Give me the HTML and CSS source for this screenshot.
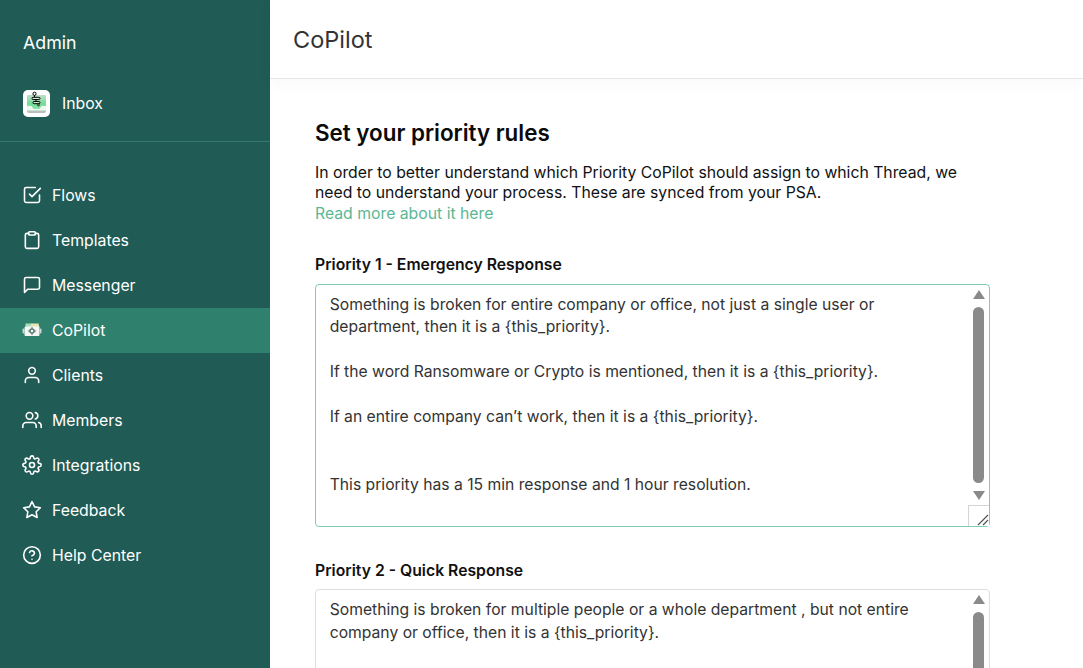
FILE: index.html
```html
<!DOCTYPE html>
<html lang="en">
<head>
<meta charset="utf-8">
<title>CoPilot</title>
<link rel="stylesheet" href="styles.css">
</head>
<body>
<div class="app">
  <aside class="sidebar">
    <div class="workspace">Admin</div>
    <div class="inbox">
      <span class="inbox-logo">
        <svg width="27" height="27" viewBox="0 0 27 27">
          <defs>
            <linearGradient id="tray" x1="0" y1="0" x2="0" y2="1">
              <stop offset="0" stop-color="#c4dccb"/>
              <stop offset=".55" stop-color="#74dc97"/>
              <stop offset="1" stop-color="#8fe6ad"/>
            </linearGradient>
          </defs>
          <rect x="0" y="0" width="27" height="27" rx="5" fill="#fff"/>
          <rect x="4" y="6" width="19" height="17" rx="2" fill="#bdbdbd"/>
          <rect x="4" y="5" width="19" height="15.500" rx="1" fill="url(#tray)"/>
          <path d="M4 16h4.500l2 3h6l2-3H23v4.500H4z" fill="#eef8ef"/>
          <circle cx="11.500" cy="3.800" r="1.600" fill="#fff" stroke="#000" stroke-width="1"/>
          <path d="M11.500 5.400V7.300" stroke="#000" stroke-width="1" fill="none"/>
          <rect x="9" y="7.300" width="8" height="2.200" rx="1.100" fill="#d9efdf" stroke="#000" stroke-width="1"/>
          <path d="M13 9.500v2" stroke="#000" stroke-width="1" fill="none"/>
          <rect x="10" y="11.500" width="7" height="2.200" rx="1.100" fill="#c7efd4" stroke="#000" stroke-width="1"/>
          <circle cx="15.500" cy="15" r="0.900" fill="#fff" stroke="#000" stroke-width="0.900"/>
        </svg>
      </span>
      <span class="inbox-label">Inbox</span>
    </div>
    <nav class="nav">
      <a class="nav-item">
        <svg class="nav-icon" viewBox="0 0 24 24"><path d="M9 11l3 3L22 4"/><path d="M21 12v7a2 2 0 0 1-2 2H5a2 2 0 0 1-2-2V5a2 2 0 0 1 2-2h11"/></svg>
        <span>Flows</span>
      </a>
      <a class="nav-item">
        <svg class="nav-icon" viewBox="0 0 24 24"><path d="M16 4h2a2 2 0 0 1 2 2v14a2 2 0 0 1-2 2H6a2 2 0 0 1-2-2V6a2 2 0 0 1 2-2h2"/><rect x="8" y="2" width="8" height="4" rx="1"/></svg>
        <span>Templates</span>
      </a>
      <a class="nav-item">
        <svg class="nav-icon" viewBox="0 0 24 24"><path d="M21 15a2 2 0 0 1-2 2H7l-4 4V5a2 2 0 0 1 2-2h14a2 2 0 0 1 2 2z"/></svg>
        <span>Messenger</span>
      </a>
      <a class="nav-item active">
        <svg class="nav-icon copilot-icon" viewBox="0 0 20 14">
          <path d="M3.500 0.500h7l-2 4h-5z" fill="#a8dcb8"/>
          <path d="M9.500 0.500h7l1 4h-9z" fill="#e8e6b4"/>
          <rect x="2.500" y="3.500" width="15" height="9.500" rx="1.200" fill="#f4f7f4"/>
          <rect x="0.500" y="5.500" width="2" height="5" rx="1" fill="#c9d6d1"/>
          <rect x="17.500" y="5.500" width="2" height="5" rx="1" fill="#c9d6d1"/>
          <circle cx="10" cy="8" r="2.800" fill="#5d7d76"/>
          <circle cx="10" cy="8" r="1.300" fill="#f4f7f4"/>
          <path d="M10 4.300v1.500M10 10.200v1.500M6.300 8h1.500M12.200 8h1.500" stroke="#5d7d76" stroke-width="1"/>
        </svg>
        <span>CoPilot</span>
      </a>
      <a class="nav-item">
        <svg class="nav-icon" viewBox="0 0 24 24"><path d="M20 21v-2a4 4 0 0 0-4-4H8a4 4 0 0 0-4 4v2"/><circle cx="12" cy="7" r="4"/></svg>
        <span>Clients</span>
      </a>
      <a class="nav-item">
        <svg class="nav-icon" viewBox="0 0 24 24"><path d="M17 21v-2a4 4 0 0 0-4-4H5a4 4 0 0 0-4 4v2"/><circle cx="9" cy="7" r="4"/><path d="M23 21v-2a4 4 0 0 0-3-3.870"/><path d="M16 3.130a4 4 0 0 1 0 7.750"/></svg>
        <span>Members</span>
      </a>
      <a class="nav-item">
        <svg class="nav-icon" viewBox="0 0 24 24"><circle cx="12" cy="12" r="3"/><path d="M19.400 15a1.650 1.650 0 0 0 .33 1.820l.06.06a2 2 0 0 1 0 2.830 2 2 0 0 1-2.830 0l-.06-.06a1.650 1.650 0 0 0-1.820-.33 1.650 1.650 0 0 0-1 1.510V21a2 2 0 0 1-2 2 2 2 0 0 1-2-2v-.09A1.650 1.650 0 0 0 9 19.400a1.650 1.650 0 0 0-1.820.33l-.06.06a2 2 0 0 1-2.830 0 2 2 0 0 1 0-2.830l.06-.06a1.650 1.650 0 0 0 .33-1.820 1.650 1.650 0 0 0-1.510-1H3a2 2 0 0 1-2-2 2 2 0 0 1 2-2h.09A1.650 1.650 0 0 0 4.600 9a1.650 1.650 0 0 0-.33-1.820l-.06-.06a2 2 0 0 1 0-2.830 2 2 0 0 1 2.830 0l.06.06a1.650 1.650 0 0 0 1.820.33H9a1.650 1.650 0 0 0 1-1.510V3a2 2 0 0 1 2-2 2 2 0 0 1 2 2v.09a1.650 1.650 0 0 0 1 1.510 1.650 1.650 0 0 0 1.820-.33l.06-.06a2 2 0 0 1 2.830 0 2 2 0 0 1 0 2.830l-.06.06a1.650 1.650 0 0 0-.33 1.820V9a1.650 1.650 0 0 0 1.510 1H21a2 2 0 0 1 2 2 2 2 0 0 1-2 2h-.09a1.650 1.650 0 0 0-1.510 1z"/></svg>
        <span>Integrations</span>
      </a>
      <a class="nav-item">
        <svg class="nav-icon" viewBox="0 0 24 24"><polygon points="12 2 15.090 8.260 22 9.270 17 14.140 18.180 21.020 12 17.770 5.820 21.020 7 14.140 2 9.270 8.910 8.260 12 2"/></svg>
        <span>Feedback</span>
      </a>
      <a class="nav-item">
        <svg class="nav-icon" viewBox="0 0 24 24"><circle cx="12" cy="12" r="10"/><path d="M9.090 9a3 3 0 0 1 5.830 1c0 2-3 3-3 3"/><line x1="12" y1="17" x2="12.010" y2="17"/></svg>
        <span>Help Center</span>
      </a>
    </nav>
  </aside>
  <div class="main">
    <header class="topbar"><h1 class="page-title">CoPilot</h1></header>
    <section class="content">
      <h2 class="section-title">Set your priority rules</h2>
      <p class="intro">In order to better understand which Priority CoPilot should assign to which Thread, we need to understand your process. These are synced from your PSA.<br><a class="link">Read more about it here</a></p>
      <div class="field">
        <div class="field-label">Priority 1 - Emergency Response</div>
        <div class="box box-focus">
          <div class="box-text">Something is broken for entire company or office, not just a single user or department, then it is a {this_priority}.

If the word Ransomware or Crypto is mentioned, then it is a {this_priority}.

If an entire company can’t work, then it is a {this_priority}.


This priority has a 15 min response and 1 hour resolution.</div>
          <div class="scrollbar" aria-hidden="true">
            <span class="arrow-up"></span>
            <span class="thumb"></span>
            <span class="arrow-down"></span>
          </div>
          <div class="resizer" aria-hidden="true">
            <svg width="21" height="21" viewBox="0 0 21 21"><path d="M9 19L19 9M14 19l5-5" stroke="#555" stroke-width="1.200" fill="none"/></svg>
          </div>
        </div>
      </div>
      <div class="field">
        <div class="field-label">Priority 2 - Quick Response</div>
        <div class="box box-second">
          <div class="box-text">Something is broken for multiple people or a whole department , but not entire company or office, then it is a {this_priority}.</div>
          <div class="scrollbar" aria-hidden="true">
            <span class="arrow-up"></span>
            <span class="thumb"></span>
          </div>
        </div>
      </div>
    </section>
  </div>
</div>
</body>
</html>
```
FILE: styles.css
```css
* { box-sizing: border-box; }
html, body { margin: 0; height: 100%; overflow: hidden; }
body { font-family: Inter, "Liberation Sans", sans-serif; background: #fff; color: #111; }
.app { display: flex; height: 668px; overflow: hidden; }
.sidebar { width: 270px; flex: none; background: #205b55; color: #fff; display: flex; flex-direction: column; }
.workspace { font-size: 17.800px; line-height: 22px; padding: 32px 23px 0; }
.inbox { display: flex; align-items: center; gap: 12px; padding: 0 23px; margin-top: 36px; height: 27px; font-size: 15.800px; }
.inbox-logo { width: 27px; height: 27px; display: block; }
.inbox-logo svg { display: block; overflow: visible; }
.nav { margin-top: 24px; border-top: 1px solid #33796c; padding-top: 31px; display: flex; flex-direction: column; }
.nav-item { height: 45px; display: flex; align-items: center; gap: 10px; padding: 0 22px 1px; font-size: 15.800px; color: #fff; }
.nav-item.active { background: #2f806c; }
.nav-icon { width: 20px; height: 20px; flex: none; fill: none; stroke: #fff; stroke-width: 1.900; stroke-linecap: round; stroke-linejoin: round; }
.copilot-icon { stroke: none; height: 14px; }
.main { flex: 1; min-width: 0; display: flex; flex-direction: column; }
.topbar { height: 79px; flex: none; border-bottom: 1px solid #e5e7e6; display: flex; align-items: center; padding: 0 23px; box-shadow: 0 4px 16px rgba(0,0,0,.03); }
.page-title { margin: 0; font-size: 23.500px; font-weight: 400; color: #333; }
.content { padding: 40px 45px 0; width: 765px; }
.section-title { margin: 0; font-size: 22.400px; line-height: 27px; font-weight: 600; color: #0b0b0b; }
.intro { margin: 16.700px 0 0; font-size: 15.770px; line-height: 20.500px; color: #111; }
.link { color: #5bb795; }
.field { margin-top: 32px; }
.field + .field { margin-top: 35px; }
.field-label { font-size: 15.750px; line-height: 18px; font-weight: 600; color: #111; }
.box { position: relative; margin-top: 10px; height: 243px; width: 675px; border: 1px solid #dcdfde; border-radius: 4px; background: #fff; }
.box-focus { border-color: #7fcdb3; }
.box-second { margin-top: 9px; }
.box-text { padding: 8.500px 30px 0 13.700px; font-size: 15.700px; line-height: 22.500px; white-space: pre-wrap; color: #333; }
.box-second .box-text { padding-top: 9px; }
.scrollbar { position: absolute; top: 0; right: 0; bottom: 0; width: 17px; }
.arrow-up, .arrow-down { position: absolute; left: 1px; width: 0; height: 0; border-left: 6px solid transparent; border-right: 6px solid transparent; }
.arrow-up { top: 5px; border-bottom: 9px solid #8a8a8a; }
.arrow-down { bottom: 26px; border-top: 9px solid #8a8a8a; }
.thumb { position: absolute; left: 1px; width: 11px; top: 22px; bottom: 43px; border-radius: 6px; background: #8a8a8a; }
.resizer { position: absolute; right: 0; bottom: 0; width: 21px; height: 21px; background: #fff; border-top: 1px solid #d4d4d4; border-left: 1px solid #d4d4d4; }
.resizer svg { display: block; }
```
